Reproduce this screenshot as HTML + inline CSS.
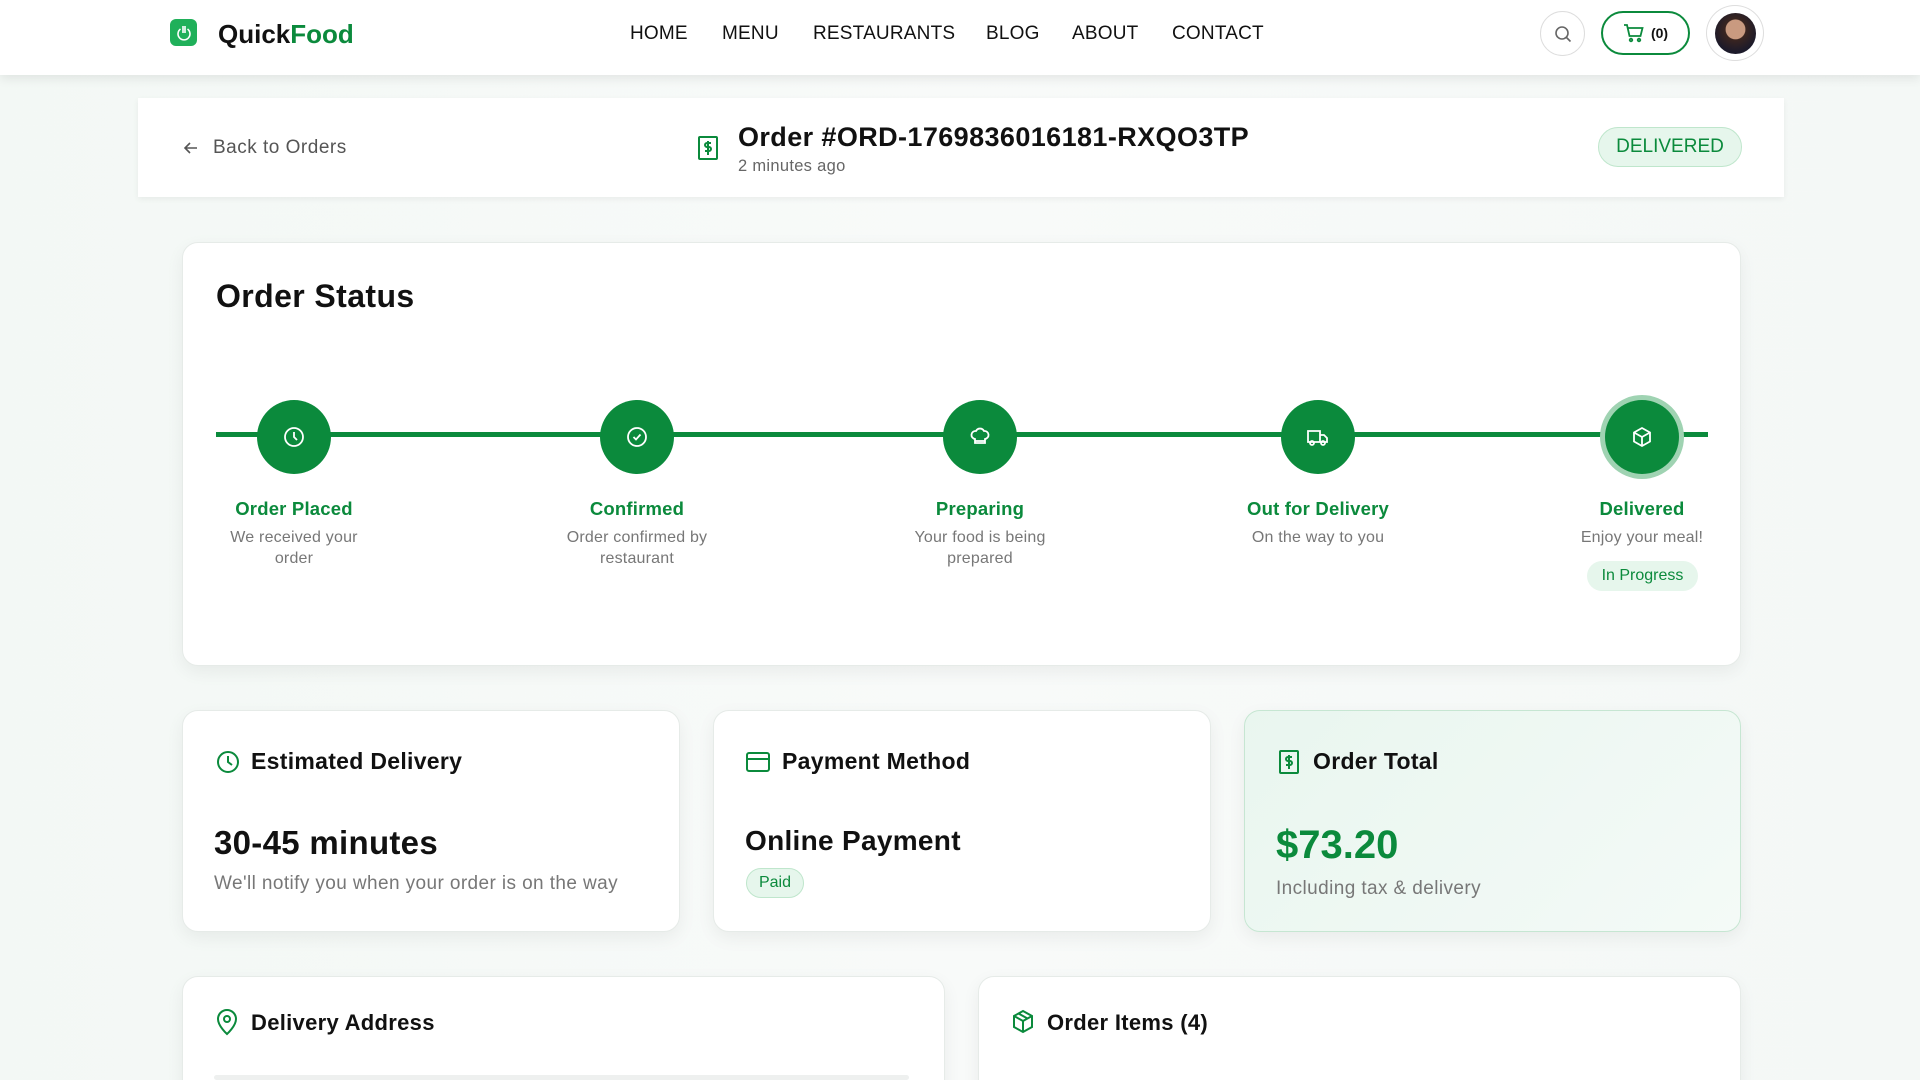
<!DOCTYPE html>
<html style="height:1080px;overflow:hidden"><head><meta charset="utf-8"><style>
*{margin:0;padding:0;box-sizing:border-box}
html,body{width:1920px;height:1080px;overflow:hidden}
body{font-family:"Liberation Sans",sans-serif;background:linear-gradient(90deg,#f3f8f5,#f8faf9 50%,#f4f8f6);position:relative;color:#111}
.a{position:absolute}
.g{color:#0b8a3c}
.card{position:absolute;background:#fff;border:1px solid #e6ebe8;border-radius:16px;box-shadow:0 6px 18px rgba(0,0,0,.06)}
.nav a{position:absolute;top:23px;font-size:19px;font-weight:500;color:#111;letter-spacing:.2px}
.circ{position:absolute;width:74px;height:74px;border-radius:50%;background:#0b8a3c;margin-left:-37px;top:400px;display:flex;align-items:center;justify-content:center}
.lbl{position:absolute;top:498px;font-size:18.5px;font-weight:700;color:#0b8a3c;width:240px;margin-left:-120px;text-align:center;letter-spacing:.2px}
.dsc{position:absolute;top:527px;font-size:16px;color:#777;line-height:21px;width:200px;margin-left:-100px;text-align:center;letter-spacing:.2px}
.ct{position:absolute;top:748px;font-size:23px;font-weight:600;color:#111;letter-spacing:.3px}
</style></head><body>
<div class="a" style="left:0;top:0;width:1920px;height:75px;background:#fff;box-shadow:0 4px 10px rgba(0,0,0,.08)"></div>
<div class="a" style="left:170px;top:19px;width:27px;height:27px;border-radius:6px;background:#20b05a;display:flex;align-items:center;justify-content:center"><svg width="18" height="18" viewBox="0 0 18 18" fill="none" stroke="#fff" stroke-width="1.6"><path d="M5.5 5a6 6 0 1 0 7 0"/><path d="M8 2v7M10 2v7"/></svg></div>
<div class="a" style="left:218px;top:19px;font-size:26px;font-weight:700">Quick<span class="g">Food</span></div>
<div class="nav"><a style="left:630px">HOME</a><a style="left:722px">MENU</a><a style="left:813px">RESTAURANTS</a><a style="left:986px">BLOG</a><a style="left:1072px">ABOUT</a><a style="left:1172px">CONTACT</a></div>
<div class="a" style="left:1540px;top:11px;width:45px;height:45px;border:1px solid #ddd;border-radius:50%;display:flex;align-items:center;justify-content:center"><svg width="20" height="20" viewBox="0 0 20 20" fill="none" stroke="#666" stroke-width="1.6"><circle cx="9" cy="9" r="6"/><path d="M13.5 13.5l4 4"/></svg></div>
<div class="a" style="left:1601px;top:11px;width:89px;height:44px;border:2px solid #0b8a3c;border-radius:22px;display:flex;align-items:center;justify-content:center;gap:6px;font-size:14px;font-weight:600"><svg width="22" height="20" viewBox="0 0 22 20" fill="none" stroke="#0b8a3c" stroke-width="1.8"><path d="M1 2h3l2.5 11h11l2-8H5"/><circle cx="8" cy="17" r="1.3"/><circle cx="16" cy="17" r="1.3"/></svg>(0)</div>
<div class="a" style="left:1706px;top:5px;width:58px;height:56px;border:1px solid #ddd;border-radius:50%;background:#fff"><div style="margin:7px auto;width:41px;height:41px;border-radius:50%;background:radial-gradient(circle at 50% 40%,#c99a80 0 30%,#3a2520 32%,#1c1a2a 70%)"></div></div>

<div class="a" style="left:138px;top:98px;width:1646px;height:99px;background:#fff;box-shadow:0 2px 6px rgba(0,0,0,.06)"></div>
<svg class="a" style="left:182px;top:139px" width="18" height="18" viewBox="0 0 18 18" fill="none" stroke="#555" stroke-width="1.6"><path d="M15 9H3M8 4L3 9l5 5"/></svg>
<div class="a" style="left:213px;top:137px;font-size:19px;color:#555;letter-spacing:.5px">Back to Orders</div>
<svg class="a" style="left:697px;top:135px" width="22" height="26" viewBox="0 0 22 26" fill="none" stroke="#0b8a3c" stroke-width="2"><rect x="2" y="2" width="18" height="22" rx="1"/><path d="M14 8h-4a2 2 0 0 0 0 4h2a2 2 0 0 1 0 4H8M11 6v14"/></svg>
<div class="a" style="left:738px;top:122px;font-size:27px;font-weight:700;letter-spacing:.4px">Order #ORD-1769836016181-RXQO3TP</div>
<div class="a" style="left:738px;top:157px;font-size:16.5px;color:#666;letter-spacing:.3px">2 minutes ago</div>
<div class="a" style="left:1598px;top:127px;width:144px;height:40px;border-radius:20px;background:#e6f6ec;border:1px solid #bfe6cc;color:#0b8a3c;font-size:19px;font-weight:500;display:flex;align-items:center;justify-content:center">DELIVERED</div>

<div class="card" style="left:182px;top:242px;width:1559px;height:424px"></div>
<div class="a" style="left:216px;top:278px;font-size:32px;font-weight:600;letter-spacing:.4px">Order Status</div>
<div class="a" style="left:216px;top:432px;width:1492px;height:5px;background:#0b8a3c"></div>
<div class="a" style="left:1600px;top:395px;width:84px;height:84px;border-radius:50%;background:#9fd3b2"></div>
<div class="circ" style="left:294px"><svg width="24" height="24" viewBox="0 0 24 24" fill="none" stroke="#fff" stroke-width="1.8"><circle cx="12" cy="12" r="9"/><path d="M12 7v5l3 3"/></svg></div>
<div class="circ" style="left:637px"><svg width="24" height="24" viewBox="0 0 24 24" fill="none" stroke="#fff" stroke-width="1.8"><circle cx="12" cy="12" r="9"/><path d="M8.5 12l2.5 2.5 4.5-5"/></svg></div>
<div class="circ" style="left:980px"><svg width="24" height="24" viewBox="0 0 24 24" fill="none" stroke="#fff" stroke-width="1.8"><path d="M7 14a4 4 0 0 1 1-8 4.5 4.5 0 0 1 8 0 4 4 0 0 1 1 8v4H7z"/><path d="M7 16h10"/></svg></div>
<div class="circ" style="left:1318px"><svg width="26" height="24" viewBox="0 0 26 24" fill="none" stroke="#fff" stroke-width="1.8"><path d="M3 6h12v11H3zM15 10h4l3 3v4h-7"/><circle cx="7" cy="18" r="2"/><circle cx="18" cy="18" r="2"/></svg></div>
<div class="circ" style="left:1642px"><svg width="24" height="24" viewBox="0 0 24 24" fill="none" stroke="#fff" stroke-width="1.8"><path d="M12 3l8 4.5v9L12 21l-8-4.5v-9z"/><path d="M4 7.5l8 4.5 8-4.5M12 12v9"/></svg></div>
<div class="lbl" style="left:294px">Order Placed</div><div class="dsc" style="left:294px">We received your<br>order</div>
<div class="lbl" style="left:637px">Confirmed</div><div class="dsc" style="left:637px">Order confirmed by<br>restaurant</div>
<div class="lbl" style="left:980px">Preparing</div><div class="dsc" style="left:980px">Your food is being<br>prepared</div>
<div class="lbl" style="left:1318px">Out for Delivery</div><div class="dsc" style="left:1318px">On the way to you</div>
<div class="lbl" style="left:1642px">Delivered</div><div class="dsc" style="left:1642px">Enjoy your meal!</div>
<div class="a" style="left:1587px;top:561px;width:111px;height:30px;border-radius:15px;background:#e6f6ec;color:#0b8a3c;font-size:16px;font-weight:500;display:flex;align-items:center;justify-content:center">In Progress</div>

<div class="card" style="left:182px;top:710px;width:498px;height:222px"></div>
<div class="card" style="left:713px;top:710px;width:498px;height:222px"></div>
<div class="card" style="left:1244px;top:710px;width:497px;height:222px;background:linear-gradient(135deg,#e9f6ef,#f4faf7);border-color:#c6e6d2"></div>
<svg class="a" style="left:215px;top:749px" width="26" height="26" viewBox="0 0 26 26" fill="none" stroke="#0b8a3c" stroke-width="2"><circle cx="13" cy="13" r="10"/><path d="M13 7v6l4 3"/></svg>
<div class="ct" style="left:251px">Estimated Delivery</div>
<div class="a" style="left:214px;top:824px;font-size:33px;font-weight:700;letter-spacing:.3px">30-45 minutes</div>
<div class="a" style="left:214px;top:873px;font-size:19px;color:#777;letter-spacing:.4px">We'll notify you when your order is on the way</div>
<svg class="a" style="left:745px;top:751px" width="26" height="22" viewBox="0 0 26 22" fill="none" stroke="#0b8a3c" stroke-width="2"><rect x="2" y="2" width="22" height="18" rx="2"/><path d="M2 8h22"/></svg>
<div class="ct" style="left:782px">Payment Method</div>
<div class="a" style="left:745px;top:825px;font-size:28px;font-weight:600;letter-spacing:.3px">Online Payment</div>
<div class="a" style="left:746px;top:868px;width:58px;height:30px;border-radius:15px;background:#e6f6ec;border:1px solid #bfe6cc;color:#0b8a3c;font-size:16px;display:flex;align-items:center;justify-content:center">Paid</div>
<svg class="a" style="left:1278px;top:749px" width="22" height="26" viewBox="0 0 22 26" fill="none" stroke="#0b8a3c" stroke-width="2"><rect x="2" y="2" width="18" height="22" rx="1"/><path d="M14 8h-4a2 2 0 0 0 0 4h2a2 2 0 0 1 0 4H8M11 6v14"/></svg>
<div class="ct" style="left:1313px">Order Total</div>
<div class="a g" style="left:1276px;top:823px;font-size:40px;font-weight:700">$73.20</div>
<div class="a" style="left:1276px;top:878px;font-size:19px;color:#777;letter-spacing:.4px">Including tax &amp; delivery</div>

<div class="card" style="left:182px;top:976px;width:763px;height:140px"></div>
<div class="card" style="left:978px;top:976px;width:763px;height:140px"></div>
<svg class="a" style="left:215px;top:1008px" width="24" height="28" viewBox="0 0 24 28" fill="none" stroke="#0b8a3c" stroke-width="2"><path d="M12 26s9-8 9-15a9 9 0 0 0-18 0c0 7 9 15 9 15z"/><circle cx="12" cy="11" r="3"/></svg>
<div class="ct" style="left:251px;top:1010px;font-size:22px">Delivery Address</div>
<div class="a" style="left:214px;top:1075px;width:695px;height:5px;background:#eef0ef;border-radius:3px"></div>
<svg class="a" style="left:1010px;top:1008px" width="26" height="28" viewBox="0 0 26 28" fill="none" stroke="#0b8a3c" stroke-width="2"><path d="M13 3l9 5v11l-9 5-9-5V8z"/><path d="M4 8l9 5 9-5M13 13v11M8.5 5.5l9 5"/></svg>
<div class="ct" style="left:1047px;top:1010px;font-size:22px">Order Items (4)</div>
</body></html>
